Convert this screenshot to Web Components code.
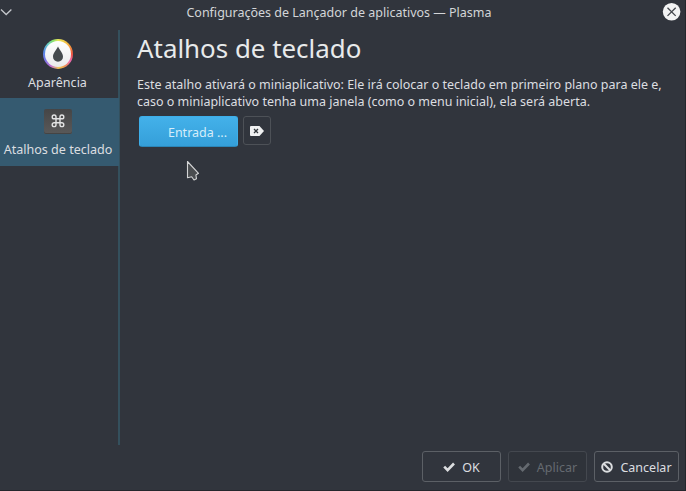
<!DOCTYPE html>
<html lang="pt-BR">
<head>
<meta charset="utf-8">
<title>Configurações</title>
<style>
html,body{margin:0;height:100%;background:#31353d;overflow:hidden}
body{font-family:"Noto Sans",sans-serif;font-size:12.5px;color:#dcdee0}
</style>
</head>
<body>
<settings-window></settings-window>
<script>
const define = (name, html) => customElements.define(name, class extends HTMLElement {
  constructor() {
    super();
    this.attachShadow({mode: 'open'}).innerHTML = html;
  }
});

define('title-bar', `<style>
:host{display:grid;grid-template-columns:20px 1fr 20px;height:24px;align-items:start;padding-right:4px}
.t{text-align:center;font-size:12.5px;line-height:24px;padding:1px 4px 0 0;white-space:nowrap;color:#d3d5d8}
svg{display:block}
</style>
<svg width="14" height="24" viewBox="0 0 14 24"><path d="M1 9.500l5.200 5 5.200-5" fill="none" stroke="#c5c8cc" stroke-width="1.300"/></svg>
<div class="t"><slot></slot></div>
<svg width="20" height="24" viewBox="0 0 20 24"><circle cx="9.600" cy="11.800" r="8.800" fill="#f2f3f4"/><path d="M5.500 7.700l8.200 8.200M13.700 7.700l-8.200 8.200" stroke="#42464c" stroke-width="1.300"/></svg>`);

define('side-item', `<style>
:host{display:flex;flex-direction:column;align-items:center;box-sizing:border-box;height:67px;padding-top:6px;white-space:nowrap}
:host([selected]){background:#355a70;height:68px}
.i{height:34px;display:grid;place-items:center}
.l{line-height:18px;margin-top:3px;padding-right:3px;font-size:12.55px}
.i ::slotted(*){display:block}
</style><div class="i"><slot name="icon"></slot></div><div class="l"><slot></slot></div>`);

define('appearance-icon', `<style>
:host{display:block;width:32px;height:32px;border-radius:50%;margin-right:3px}
.r{width:30px;height:30px;margin:1px;border-radius:50%;display:grid;place-items:center;background:conic-gradient(#e5e85b,#f7b53e 45deg,#f0523f 90deg,#ec6ab0 120deg,#ed8f51 150deg,#f0c94c 175deg,#c46fd0 210deg,#7776e8 245deg,#5688e6 280deg,#67cfc4 315deg,#8be16b 340deg,#e5e85b)}
.c{width:26px;height:26px;border-radius:50%;background:linear-gradient(#fff,#e9eaeb);display:grid;place-items:center}
svg{display:block}
</style><div class="r"><div class="c"><svg width="26" height="26" viewBox="0 0 26 26"><path d="M13 5.500c1.500 3.200 5 6.500 5 10.200a5 5 0 0 1-10 0C8 12 11.500 8.700 13 5.500z" fill="#454a4e"/></svg></div></div>`);

define('shortcut-icon', `<style>
:host{display:block;width:28px;height:25px;border-radius:2px;background:linear-gradient(#454546,#5a5959);box-shadow:inset 0 -1px #454444;margin-right:3px}
svg{display:block}
</style><svg width="28" height="25" viewBox="0 0 28 25"><path d="M12 9.700V7.900a1.900 1.900 0 1 0-1.900 1.900h7.800A1.900 1.900 0 1 0 16 7.900v7.800a1.900 1.900 0 1 0 1.900-1.900h-7.800a1.900 1.900 0 1 0 1.900 1.900z" fill="none" stroke="#e3e3e3" stroke-width="1.400"/></svg>`);

define('side-list', `<style>
:host{display:block;width:120px;height:415px;box-sizing:border-box;border-right:2px solid #34505d;padding-top:1px}
::slotted([selected]){width:119px}
</style><slot></slot>`);

define('push-button', `<style>
:host{display:flex;align-items:center;justify-content:center;box-sizing:border-box;height:31px;border:1px solid #5c6066;border-radius:3px;background:#31353d;gap:7px;white-space:nowrap}
:host([primary]){width:99px;background:linear-gradient(#43b1ea,#359fd9);border-color:#3daee9;border-bottom-color:#2b86b8;color:#d5edfa;padding-left:18px}
:host([icon-only]){width:28px;height:29px;border-color:#4d5157}
:host([disabled]){color:#656a70;border-color:#44484f;background:#2f333a}
.l{line-height:18px;padding-top:2px}
:host([icon-only]) .l{display:none}
</style><slot name="icon"></slot><span class="l"><slot></slot></span>`);

define('check-mark', `<style>:host{display:block}svg{display:block}</style>
<svg width="12" height="12" viewBox="0 0 12 12"><path d="M1.200 5.700l3.400 3.500 6.400-6.700" fill="none" stroke="currentColor" stroke-width="2.600"/></svg>`);
define('cancel-mark', `<style>:host{display:block}svg{display:block}</style>
<svg width="12" height="12" viewBox="0 0 12 12"><circle cx="6" cy="6" r="4.800" fill="none" stroke="currentColor" stroke-width="2"/><path d="M2.800 2.800l6.400 6.400" stroke="currentColor" stroke-width="2"/></svg>`);
define('clear-mark', `<style>:host{display:block}svg{display:block}</style>
<svg width="14" height="10" viewBox="0 0 14 10"><path d="M1 0h8.500L14 5 9.500 10H1a1 1 0 0 1-1-1V1a1 1 0 0 1 1-1z" fill="#eff0f1"/><path d="M4 3l4 4M8 3L4 7" stroke="#31363b" stroke-width="1.300"/></svg>`);
define('pointer-arrow', `<style>:host{position:absolute;left:186px;top:160px}svg{display:block}</style>
<svg width="15" height="24" viewBox="0 0 15 24"><path d="M1.500 1.500v16.200l4.200-.9 2.300 3.200 2.500-1.200-.6-3.800 2.600-1.700z" fill="#4a4d50" stroke="#d4d5d6" stroke-width="1.100" stroke-linejoin="round"/></svg>`);

define('settings-page', `<style>
:host{display:block;padding:0 0 0 17px}
h1{font-weight:400;font-size:25.9px;line-height:36px;margin:0;color:#e8eaeb}
p{margin:10px 0 0;line-height:17px;font-size:12.49px;white-space:nowrap}
.b{display:flex;gap:5px;margin:6px 0 0 2px}
</style><h1><slot name="heading"></slot></h1><p><slot name="text"></slot></p><div class="b"><slot></slot></div>`);

define('settings-window', `<style>
:host{display:grid;grid-template-rows:24px 427px 40px;width:686px;height:491px;box-sizing:border-box;background:#31353d;box-shadow:inset -1px -1px #24272c;position:relative}
.m{display:grid;grid-template-columns:120px 1fr;align-items:start;padding-top:6px}
.f{display:flex;justify-content:flex-end;gap:7px;padding-right:7px}
.ok{width:79px}.ap{width:79px}.ca{width:85px}
</style>
<title-bar>Configurações de Lançador de aplicativos — Plasma</title-bar>
<div class="m">
<side-list>
<side-item><appearance-icon slot="icon"></appearance-icon>Aparência</side-item>
<side-item selected><shortcut-icon slot="icon"></shortcut-icon>Atalhos de teclado</side-item>
</side-list>
<settings-page><span slot="heading">Atalhos de teclado</span><span slot="text">Este atalho ativará o miniaplicativo: Ele irá colocar o teclado em primeiro plano para ele e,<br>caso o miniaplicativo tenha uma janela (como o menu inicial), ela será aberta.</span>
<push-button primary>Entrada ...</push-button><push-button icon-only><clear-mark slot="icon"></clear-mark></push-button>
</settings-page>
</div>
<div class="f">
<push-button class="ok"><check-mark slot="icon"></check-mark>OK</push-button>
<push-button class="ap" disabled><check-mark slot="icon"></check-mark>Aplicar</push-button>
<push-button class="ca"><cancel-mark slot="icon"></cancel-mark>Cancelar</push-button>
</div>
<pointer-arrow></pointer-arrow>`);
</script>
</body>
</html>
